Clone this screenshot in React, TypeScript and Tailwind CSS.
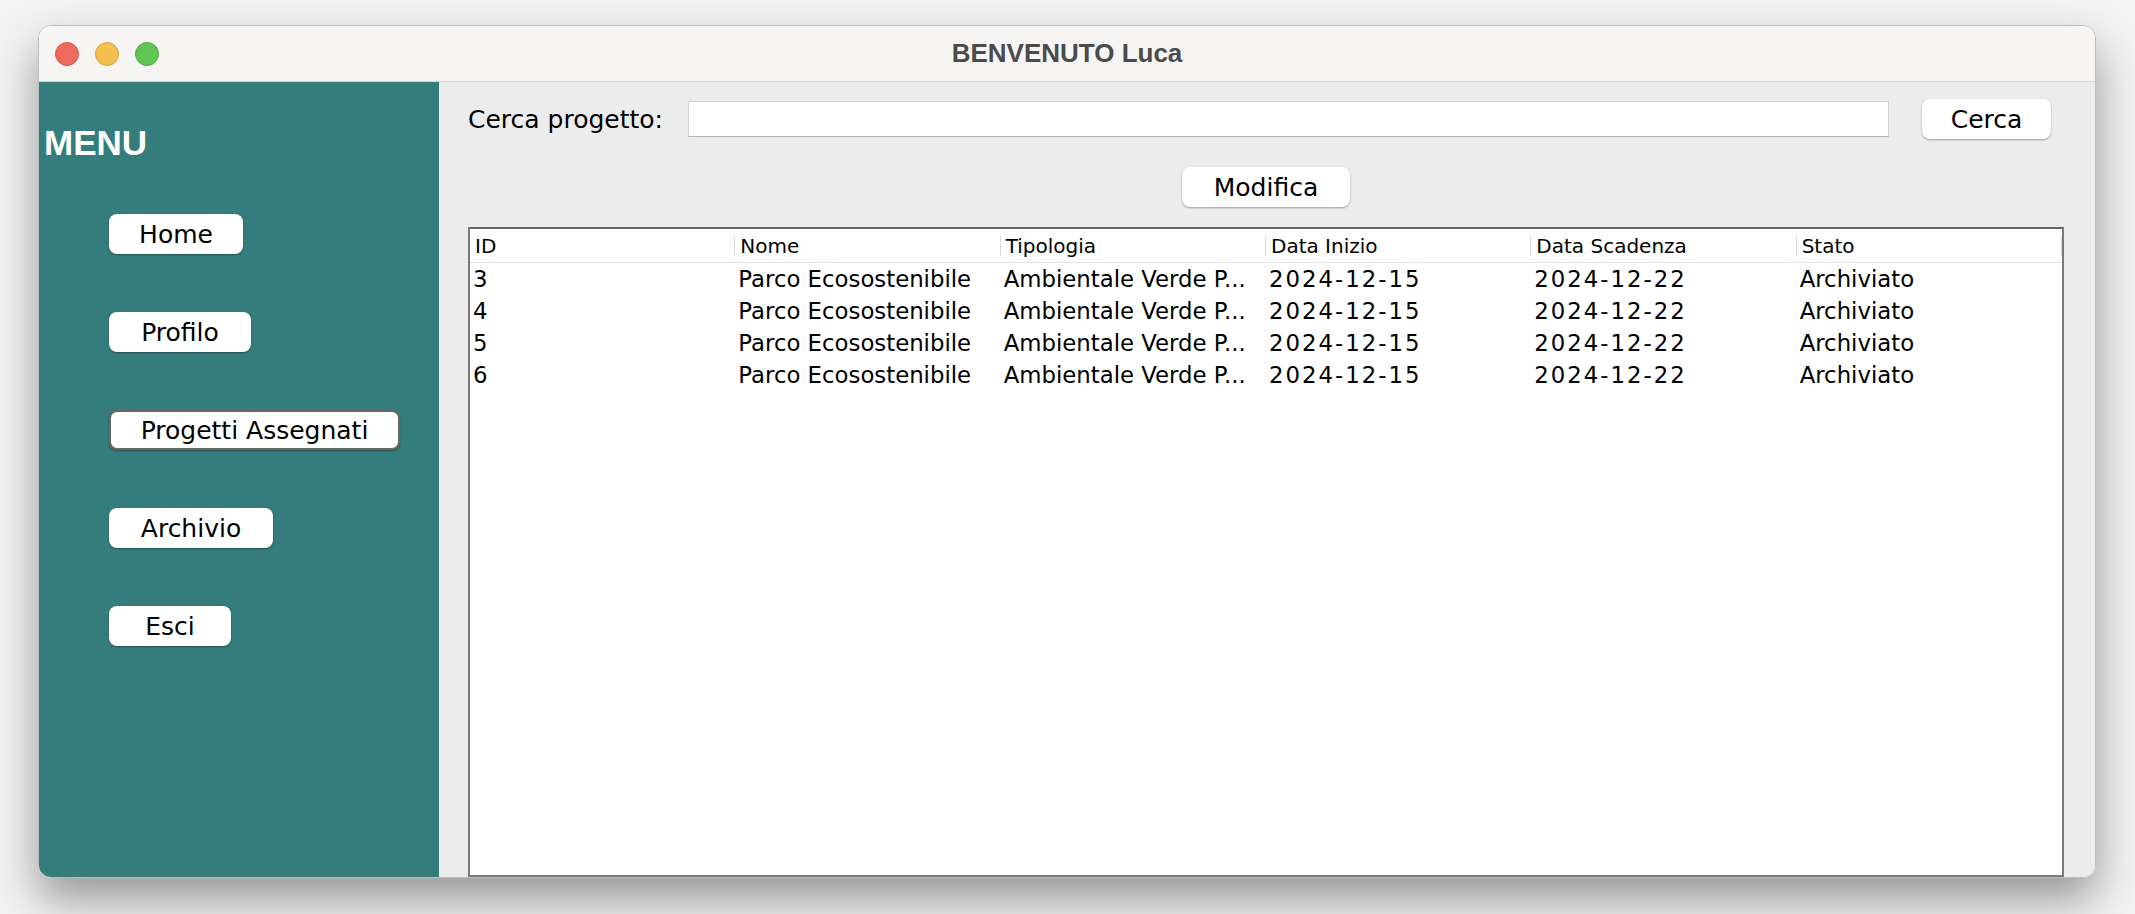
import React from 'react';

type Progetto = {
  id: number;
  nome: string;
  tipologia: string;
  inizio: string;
  scadenza: string;
  stato: string;
};

const progetti: Progetto[] = [
  { id: 3, nome: 'Parco Ecosostenibile', tipologia: 'Ambientale Verde P...', inizio: '2024-12-15', scadenza: '2024-12-22', stato: 'Archiviato' },
  { id: 4, nome: 'Parco Ecosostenibile', tipologia: 'Ambientale Verde P...', inizio: '2024-12-15', scadenza: '2024-12-22', stato: 'Archiviato' },
  { id: 5, nome: 'Parco Ecosostenibile', tipologia: 'Ambientale Verde P...', inizio: '2024-12-15', scadenza: '2024-12-22', stato: 'Archiviato' },
  { id: 6, nome: 'Parco Ecosostenibile', tipologia: 'Ambientale Verde P...', inizio: '2024-12-15', scadenza: '2024-12-22', stato: 'Archiviato' },
];

const colonne = ['ID', 'Nome', 'Tipologia', 'Data Inizio', 'Data Scadenza', 'Stato'];

const menu = [
  { label: 'Home', width: 'w-[134px]' },
  { label: 'Profilo', width: 'w-[142px]' },
  { label: 'Progetti Assegnati', width: 'w-[291px]', focused: true },
  { label: 'Archivio', width: 'w-[164px]' },
  { label: 'Esci', width: 'w-[122px]' },
];

const MacButton = ({ label, className = '' }: { label: string; className?: string }) => (
  <button
    className={`h-[40px] rounded-[8px] bg-white text-[25px] leading-none text-black shadow-[0_1px_2px_rgba(0,0,0,0.35)] ${className}`}
  >
    {label}
  </button>
);

const TrafficLights = () => (
  <div className="flex items-center gap-[16px] pl-[16px]">
    <span className="h-[24px] w-[24px] rounded-full border border-[#d5594f] bg-[#ee6a5f]" />
    <span className="h-[24px] w-[24px] rounded-full border border-[#d9a13f] bg-[#f5bf4f]" />
    <span className="h-[24px] w-[24px] rounded-full border border-[#4fa942] bg-[#61c554]" />
  </div>
);

export default function App() {
  return (
    <div className="h-[914px] w-[2135px] overflow-hidden bg-[#f3f3f3] pl-[38px] pt-[25px] font-['DejaVu_Sans',sans-serif]">
      <div className="flex h-[853px] w-[2058px] flex-col overflow-hidden rounded-[13px] border border-[#bdbdbd] shadow-[0_22px_45px_rgba(0,0,0,0.38)]">
        {/* Title bar */}
        <div className="grid h-[56px] shrink-0 grid-cols-[1fr_auto_1fr] items-center border-b border-[#d3d3d3] bg-[#f6f5f3]">
          <TrafficLights />
          <div className="font-['Liberation_Sans',Arial,sans-serif] text-[26px] font-bold text-[#4b4b4b]">BENVENUTO Luca</div>
          <div />
        </div>

        <div className="flex min-h-0 flex-1">
          {/* Sidebar */}
          <div className="flex w-[400px] shrink-0 flex-col bg-[#357c7c]">
            <div className="mt-[43px] pl-[5px] font-['Liberation_Sans',Arial,sans-serif] text-[35px] font-bold leading-none text-white">
              MENU
            </div>
            <div className="mt-[54px] flex flex-col items-start gap-[58px] pl-[70px]">
              {menu.map((m) => (
                <MacButton
                  key={m.label}
                  label={m.label}
                  className={`${m.width} ${m.focused ? 'border-2 border-[#6e665c]' : ''}`}
                />
              ))}
            </div>
          </div>

          {/* Main panel */}
          <div className="flex min-w-0 flex-1 flex-col bg-[#ececec] pl-[29px] pr-[31px] pt-[17px]">
            <div className="flex h-[40px] items-center pr-[13px]">
              <span className="text-[25px] leading-none text-black">Cerca progetto:</span>
              <input
                className="ml-[25px] h-[36px] flex-1 border border-[#d2d2d2] border-b-[#b4b4b4] bg-white px-2 text-[22px] outline-none"
                type="text"
              />
              <MacButton label="Cerca" className="ml-[33px] w-[129px]" />
            </div>

            <div className="mt-[28px] flex justify-center">
              <MacButton label="Modifica" className="h-[39px] w-[168px]" />
            </div>

            {/* Table */}
            <div className="mt-[20px] flex min-h-0 flex-1 flex-col border-2 border-[#7a7a7a] border-t-[#666666] bg-white">
              <div className="grid h-[34px] shrink-0 grid-cols-6 border-b border-[#e1e1e1]">
                {colonne.map((c) => (
                  <div key={c} className="flex items-center justify-between">
                    <span className="pl-[5px] text-[20px] leading-none text-black">{c}</span>
                    <span className="h-[20px] w-px bg-[#d9d9d9]" />
                  </div>
                ))}
              </div>
              {progetti.map((p) => (
                <div key={p.id} className="grid h-[32px] grid-cols-6 text-[22.8px] leading-none text-black">
                  <div className="flex items-center overflow-hidden whitespace-nowrap pl-[3px]">{p.id}</div>
                  <div className="flex items-center overflow-hidden whitespace-nowrap pl-[3px]">{p.nome}</div>
                  <div className="flex items-center overflow-hidden whitespace-nowrap pl-[3px]">{p.tipologia}</div>
                  <div className="flex items-center overflow-hidden whitespace-nowrap pl-[3px] tracking-[2px]">{p.inizio}</div>
                  <div className="flex items-center overflow-hidden whitespace-nowrap pl-[3px] tracking-[2px]">{p.scadenza}</div>
                  <div className="flex items-center overflow-hidden whitespace-nowrap pl-[3px]">{p.stato}</div>
                </div>
              ))}
            </div>
          </div>
        </div>
      </div>
    </div>
  );
}
